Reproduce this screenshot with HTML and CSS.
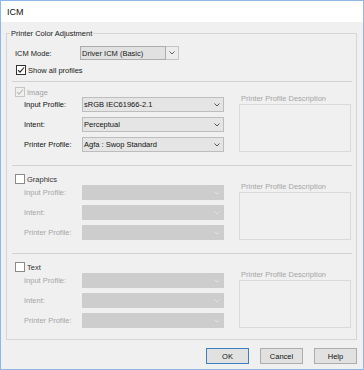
FILE: index.html
```html
<!DOCTYPE html>
<html>
<head>
<meta charset="utf-8">
<title>ICM</title>
<link rel="stylesheet" href="styles.css">
</head>
<body>
<div class="window">
  <div class="titlebar">ICM</div>
  <div class="client">
    <fieldset class="group">
      <legend class="group-title">Printer Color Adjustment</legend>
      <div class="mode-row">
        <span class="mode-label">ICM Mode:</span>
        <div class="combo"><span class="combo-text">Driver ICM (Basic)</span></div>
        <div class="combo-btn"><svg class="chev" width="6" height="4" viewBox="0 0 6 4"><path d="M0.5 0.5 L3 3 L5.5 0.5" fill="none" stroke="currentColor" stroke-width="1"/></svg></div>
      </div>
      <div class="check-row">
        <span class="cb cb-on"><svg width="8" height="8" viewBox="0 0 8 8"><path d="M1 4.2 L3 6.2 L7 1.5" fill="none" stroke="currentColor" stroke-width="1.1"/></svg></span>
        <span>Show all profiles</span>
      </div>

      <section class="sect sect-first">
        <div class="sect-head">
          <span class="cb cb-dis"><svg width="8" height="8" viewBox="0 0 8 8"><path d="M1 4.2 L3 6.2 L7 1.5" fill="none" stroke="currentColor" stroke-width="1.1"/></svg></span>
          <span class="sect-title muted">Image</span>
        </div>
        <div class="sect-body">
          <div class="fields">
            <div class="field"><span class="field-label">Input Profile:</span><div class="select"><span class="select-text">sRGB IEC61966-2.1</span><svg class="chev" width="6" height="4" viewBox="0 0 6 4"><path d="M0.5 0.5 L3 3 L5.5 0.5" fill="none" stroke="currentColor" stroke-width="1"/></svg></div></div>
            <div class="field"><span class="field-label">Intent:</span><div class="select"><span class="select-text">Perceptual</span><svg class="chev" width="6" height="4" viewBox="0 0 6 4"><path d="M0.5 0.5 L3 3 L5.5 0.5" fill="none" stroke="currentColor" stroke-width="1"/></svg></div></div>
            <div class="field"><span class="field-label">Printer Profile:</span><div class="select"><span class="select-text">Agfa : Swop Standard</span><svg class="chev" width="6" height="4" viewBox="0 0 6 4"><path d="M0.5 0.5 L3 3 L5.5 0.5" fill="none" stroke="currentColor" stroke-width="1"/></svg></div></div>
          </div>
          <div class="desc">
            <div class="desc-label">Printer Profile Description</div>
            <div class="desc-box"></div>
          </div>
        </div>
      </section>

      <section class="sect">
        <div class="sect-head">
          <span class="cb cb-off"></span>
          <span class="sect-title">Graphics</span>
        </div>
        <div class="sect-body disabled">
          <div class="fields">
            <div class="field"><span class="field-label">Input Profile:</span><div class="select"><svg class="chev" width="6" height="4" viewBox="0 0 6 4"><path d="M0.5 0.5 L3 3 L5.5 0.5" fill="none" stroke="currentColor" stroke-width="1"/></svg></div></div>
            <div class="field"><span class="field-label">Intent:</span><div class="select"><svg class="chev" width="6" height="4" viewBox="0 0 6 4"><path d="M0.5 0.5 L3 3 L5.5 0.5" fill="none" stroke="currentColor" stroke-width="1"/></svg></div></div>
            <div class="field"><span class="field-label">Printer Profile:</span><div class="select"><svg class="chev" width="6" height="4" viewBox="0 0 6 4"><path d="M0.5 0.5 L3 3 L5.5 0.5" fill="none" stroke="currentColor" stroke-width="1"/></svg></div></div>
          </div>
          <div class="desc">
            <div class="desc-label">Printer Profile Description</div>
            <div class="desc-box"></div>
          </div>
        </div>
      </section>

      <section class="sect sect-last">
        <div class="sect-head">
          <span class="cb cb-off"></span>
          <span class="sect-title">Text</span>
        </div>
        <div class="sect-body disabled">
          <div class="fields">
            <div class="field"><span class="field-label">Input Profile:</span><div class="select"><svg class="chev" width="6" height="4" viewBox="0 0 6 4"><path d="M0.5 0.5 L3 3 L5.5 0.5" fill="none" stroke="currentColor" stroke-width="1"/></svg></div></div>
            <div class="field"><span class="field-label">Intent:</span><div class="select"><svg class="chev" width="6" height="4" viewBox="0 0 6 4"><path d="M0.5 0.5 L3 3 L5.5 0.5" fill="none" stroke="currentColor" stroke-width="1"/></svg></div></div>
            <div class="field"><span class="field-label">Printer Profile:</span><div class="select"><svg class="chev" width="6" height="4" viewBox="0 0 6 4"><path d="M0.5 0.5 L3 3 L5.5 0.5" fill="none" stroke="currentColor" stroke-width="1"/></svg></div></div>
          </div>
          <div class="desc">
            <div class="desc-label">Printer Profile Description</div>
            <div class="desc-box"></div>
          </div>
        </div>
      </section>
    </fieldset>

    <div class="buttons">
      <button class="btn btn-default">OK</button>
      <button class="btn">Cancel</button>
      <button class="btn">Help</button>
    </div>
  </div>
</div>
</body>
</html>
```

FILE: styles.css
```css
* { box-sizing: border-box; }

html, body {
  margin: 0;
  padding: 0;
}

body {
  width: 364px;
  height: 370px;
  overflow: hidden;
  background: #f0f0f0;
  font-family: "Liberation Sans", Arial, sans-serif;
  font-size: 7.5px;
  color: #1a1a1a;
}

.window {
  width: 364px;
  height: 370px;
  border: 1px solid #8fb9e4;
  background: #f0f0f0;
  display: flex;
  flex-direction: column;
}

.titlebar {
  height: 21px;
  flex: none;
  background: #ffffff;
  font-size: 9px;
  line-height: 23px;
  padding-left: 6px;
  color: #111;
}

.client {
  flex: 1;
  padding: 6px 6px 0 5px;
  display: flex;
  flex-direction: column;
}

.group {
  margin: 0;
  width: 351px;
  min-width: 0;
  border: 1px solid #d6d6d6;
  padding: 7px 4px 0 5px;
}

.group-title {
  line-height: 11px;
  height: 11px;
  padding: 0 1px;
  margin-left: -2px;
}

.mode-row {
  display: flex;
  align-items: center;
  height: 14px;
  padding-left: 3px;
}

.mode-label {
  width: 65px;
}

.combo {
  width: 86px;
  height: 14px;
  background: #e1e1e1;
  border: 1px solid #adadad;
  display: flex;
  align-items: center;
  padding-left: 1px;
}

.combo-btn {
  width: 13px;
  height: 14px;
  background: #ececec;
  border: 1px solid #c4c4c4;
  border-left: none;
  display: flex;
  align-items: center;
  justify-content: center;
  color: #606060;
}

.check-row {
  display: flex;
  align-items: center;
  height: 10px;
  margin-top: 5px;
  margin-bottom: 6px;
  padding-left: 4px;
  gap: 2px;
}

.cb {
  width: 10px;
  height: 10px;
  flex: none;
  display: flex;
  align-items: center;
  justify-content: center;
  background: #ffffff;
  border: 1px solid #333333;
}

.cb-on { color: #222; }

.cb-dis {
  background: #f0f0f0;
  border-color: #c6c6c6;
  color: #b8b8b8;
}

.cb-off {
  border-color: #8a8a8a;
}

.sect {
  border-top: 1px solid #d2d2d2;
  padding: 8px 0 13px;
}

.sect-first {
  padding-top: 5px;
}

.sect-last {
  padding-bottom: 11px;
}

.sect-head {
  display: flex;
  align-items: center;
  height: 10px;
  gap: 2px;
  padding-left: 3px;
}

.sect-title { color: #333; }

.muted { color: #a2a2a2; }

.sect-body {
  display: flex;
  margin-top: 1px;
  padding-left: 12px;
}

.sect-first .sect-body {
  margin-top: 0;
}

.fields {
  width: 200px;
  display: flex;
  flex-direction: column;
  gap: 5px;
}

.field {
  display: flex;
  align-items: center;
  height: 15px;
}

.field-label {
  width: 58px;
  color: #111;
}

.select {
  width: 142px;
  height: 15px;
  background: #e5e5e5;
  border: 1px solid #bdbdbd;
  display: flex;
  align-items: center;
  padding: 0 3px 0 1px;
  color: #555;
}

.select-text {
  flex: 1;
  color: #111;
}

.select .chev {
  margin-left: auto;
}

.disabled .field-label {
  color: #a6a6a6;
}

.disabled .select {
  background: #cdcdcd;
  border-color: #cdcdcd;
  color: #e2e2e2;
}

.desc {
  width: 112px;
  margin-left: 15px;
  display: flex;
  flex-direction: column;
}

.desc-label {
  height: 7px;
  line-height: 7px;
  margin-top: -2px;
  padding-left: 2px;
  color: #a6a6a6;
  white-space: nowrap;
}

.desc-box {
  margin-top: 2px;
  height: 48px;
  border: 1px solid #dadada;
}

.buttons {
  display: flex;
  justify-content: flex-end;
  gap: 11px;
  margin-top: 8px;
}

.btn {
  width: 43px;
  height: 16px;
  padding: 0;
  margin: 0;
  background: #e1e1e1;
  border: 1px solid #adadad;
  font-family: inherit;
  font-size: 7.5px;
  color: #111;
}

.btn-default {
  border-color: #3c7fc0;
}
```
